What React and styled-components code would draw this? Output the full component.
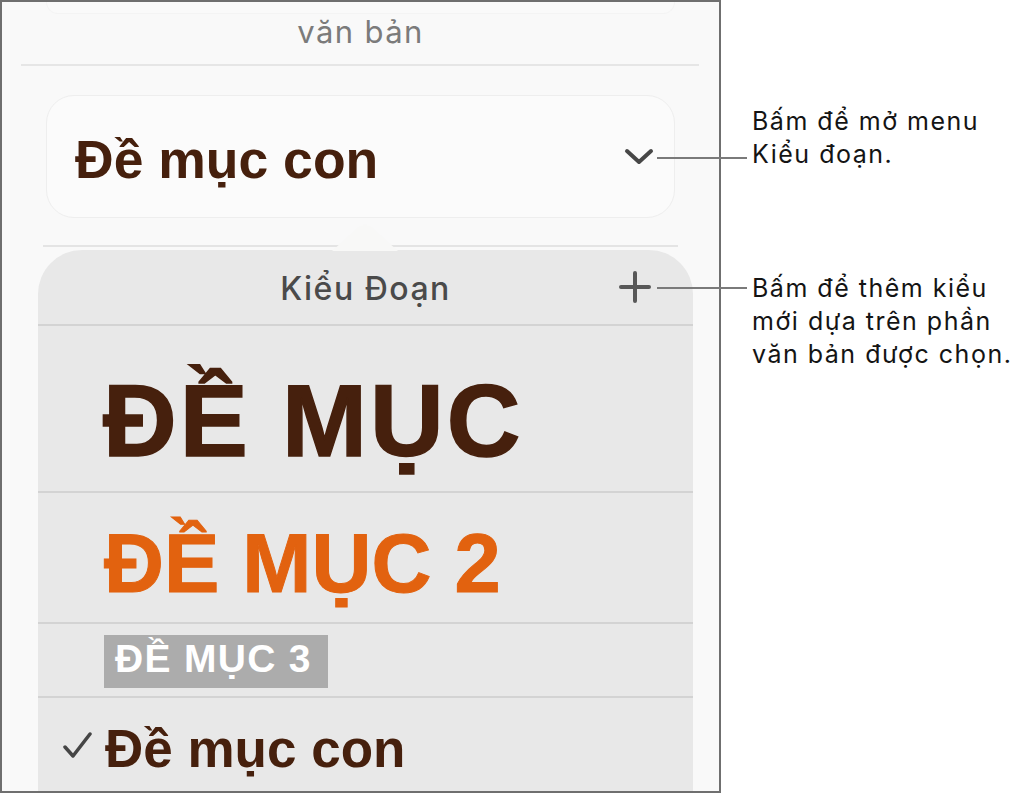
import React from "react";
import styled, { createGlobalStyle } from "styled-components";

const GlobalStyle = createGlobalStyle`
  html, body {
    margin: 0;
    padding: 0;
    background: #ffffff;
  }
  body {
    font-family: "Inter", "Liberation Sans", sans-serif;
  }
`;

const Page = styled.div`
  display: flex;
  width: 1017px;
  height: 793px;
  overflow: hidden;
`;

const Panel = styled.div`
  box-sizing: border-box;
  flex: none;
  width: 721px;
  height: 793px;
  display: flex;
  flex-direction: column;
  background: #f9f9f9;
  border: 2px solid #6f6f6f;
  overflow: hidden;
`;

// bottom of the card scrolled above the section title
const CardEdge = styled.div`
  height: 11px;
  margin: 0 44px;
  background: #fafafa;
  border: 1px solid #f4f4f4;
  border-top: none;
  border-radius: 0 0 26px 26px;
`;

const SectionTitle = styled.div`
  text-align: center;
  font-size: 31px;
  line-height: 36px;
  letter-spacing: 1.4px;
  color: #7b7b7b;
`;

const Rule = styled.div`
  flex: none;
  height: ${(p) => p.$h || 2}px;
  margin: ${(p) => p.$top || 0}px ${(p) => p.$right || 0}px 0 ${(p) => p.$left || 0}px;
  background: ${(p) => p.$color || "#d3d3d3"};
`;

const StyleButton = styled.div`
  box-sizing: border-box;
  height: 123px;
  margin: 29px 44px 0;
  display: flex;
  align-items: center;
  justify-content: space-between;
  padding: 0 20px 0 28px;
  background: #fbfbfb;
  border: 1px solid #eeeeee;
  border-radius: 28px;
`;

const Heading = styled.span`
  display: block;
  font-family: "Liberation Sans", Arial, sans-serif;
  font-weight: 700;
  font-size: ${(p) => p.$size}px;
  line-height: 1;
  letter-spacing: ${(p) => p.$track || 0}px;
  color: ${(p) => p.$color || "#46200d"};
  -webkit-text-stroke: ${(p) => p.$weight || 0}px ${(p) => p.$color || "#46200d"};
  white-space: nowrap;
`;

const CurrentStyle = styled(Heading)`
  padding-top: 6px;
`;

const CheckedStyle = styled(Heading)`
  padding-top: 24px;
`;

const Popover = styled.div`
  position: relative;
  flex: 1;
  display: flex;
  flex-direction: column;
  margin: 3px 26px 0 36px;
  background: #e8e8e8;
  border-radius: 44px 44px 0 0;
`;

const PopoverArrow = styled.svg`
  position: absolute;
  top: -27px;
  left: 294px;
`;

const PopoverHeader = styled.div`
  height: 74px;
  display: grid;
  grid-template-columns: 1fr auto 1fr;
  align-items: center;
`;

const PopoverTitle = styled.div`
  grid-column: 2;
  font-size: 32px;
  font-weight: 500;
  letter-spacing: 1.5px;
  color: #4a4a4a;
  padding-top: 2px;
`;

const AddButton = styled.svg`
  grid-column: 3;
  justify-self: end;
  margin-right: 42px;
`;

const StyleRow = styled.div`
  flex: ${(p) => (p.$fill ? 1 : "none")};
  height: ${(p) => (p.$fill ? "auto" : `${p.$h}px`)};
  box-sizing: border-box;
  display: flex;
  align-items: flex-start;
  padding: ${(p) => p.$pt}px 0 0 ${(p) => p.$pl}px;
`;

const LabelBox = styled.div`
  box-sizing: border-box;
  height: 53px;
  padding: 4px 16px 0 11px;
  background: #acacac;
`;

const Check = styled.svg`
  flex: none;
  margin-top: 34px;
  margin-right: 12px;
`;

const Notes = styled.div`
  position: relative;
  z-index: 1;
  display: flex;
  flex-direction: column;
  padding-top: 105px;
  gap: 101px;
`;

const Callout = styled.div`
  display: flex;
  align-items: flex-start;
`;

const Leader = styled.div`
  flex: none;
  width: 90px;
  height: 2px;
  margin: ${(p) => p.$y}px 5px 0 -64px;
  background: #7a7a7a;
`;

const NoteText = styled.div`
  font-size: 25px;
  line-height: 33px;
  letter-spacing: 1.5px;
  color: #141414;
  white-space: nowrap;
`;

export default function App() {
  return (
    <>
      <GlobalStyle />
      <Page>
        <Panel>
          <CardEdge />
          <SectionTitle>văn bản</SectionTitle>
          <Rule $top={14} $left={19} $right={20} $color="#e6e6e6" />

          <StyleButton>
            <CurrentStyle $size={53.5}>Đề mục con</CurrentStyle>
            <svg width="30" height="17" viewBox="0 0 30 17">
              <polyline
                points="3,3 15,14 27,3"
                fill="none"
                stroke="#474747"
                strokeWidth="4"
                strokeLinecap="round"
                strokeLinejoin="round"
              />
            </svg>
          </StyleButton>

          <Rule $top={27} $left={41} $right={41} $color="#e4e4e4" />

          <Popover>
            <PopoverArrow width="66" height="28" viewBox="0 0 66 28">
              <path d="M0 28 L27 4 Q33 -1 39 4 L66 28 Z" fill="#f8f8f7" />
            </PopoverArrow>

            <PopoverHeader>
              <PopoverTitle>Kiểu Đoạn</PopoverTitle>
              <AddButton width="32" height="32" viewBox="0 0 32 32">
                <path
                  d="M16 2 V30 M2 16 H30"
                  stroke="#585858"
                  strokeWidth="4"
                  strokeLinecap="round"
                />
              </AddButton>
            </PopoverHeader>
            <Rule />

            <StyleRow $h={165} $pt={44} $pl={65}>
              <Heading $size={102} $track={3} $weight={1.5}>
                ĐỀ MỤC
              </Heading>
            </StyleRow>
            <Rule />

            <StyleRow $h={129} $pt={29} $pl={66}>
              <Heading $size={83} $weight={1} $color="#e2620f">
                ĐỀ MỤC 2
              </Heading>
            </StyleRow>
            <Rule />

            <StyleRow $h={72} $pt={11} $pl={66}>
              <LabelBox>
                <Heading $size={39} $track={1.3} $color="#ffffff">
                  ĐỀ MỤC 3
                </Heading>
              </LabelBox>
            </StyleRow>
            <Rule />

            <StyleRow $fill $pt={0} $pl={25}>
              <Check width="30" height="27" viewBox="0 0 30 27">
                <polyline
                  points="2,15 10,24 27,2"
                  fill="none"
                  stroke="#454545"
                  strokeWidth="3.5"
                  strokeLinecap="round"
                  strokeLinejoin="round"
                />
              </Check>
              <CheckedStyle $size={53}>Đề mục con</CheckedStyle>
            </StyleRow>
          </Popover>
        </Panel>

        <Notes>
          <Callout>
            <Leader $y={52} />
            <NoteText>
              Bấm để mở menu
              <br />
              Kiểu đoạn.
            </NoteText>
          </Callout>
          <Callout>
            <Leader $y={15} />
            <NoteText>
              Bấm để thêm kiểu
              <br />
              mới dựa trên phần
              <br />
              văn bản được chọn.
            </NoteText>
          </Callout>
        </Notes>
      </Page>
    </>
  );
}
